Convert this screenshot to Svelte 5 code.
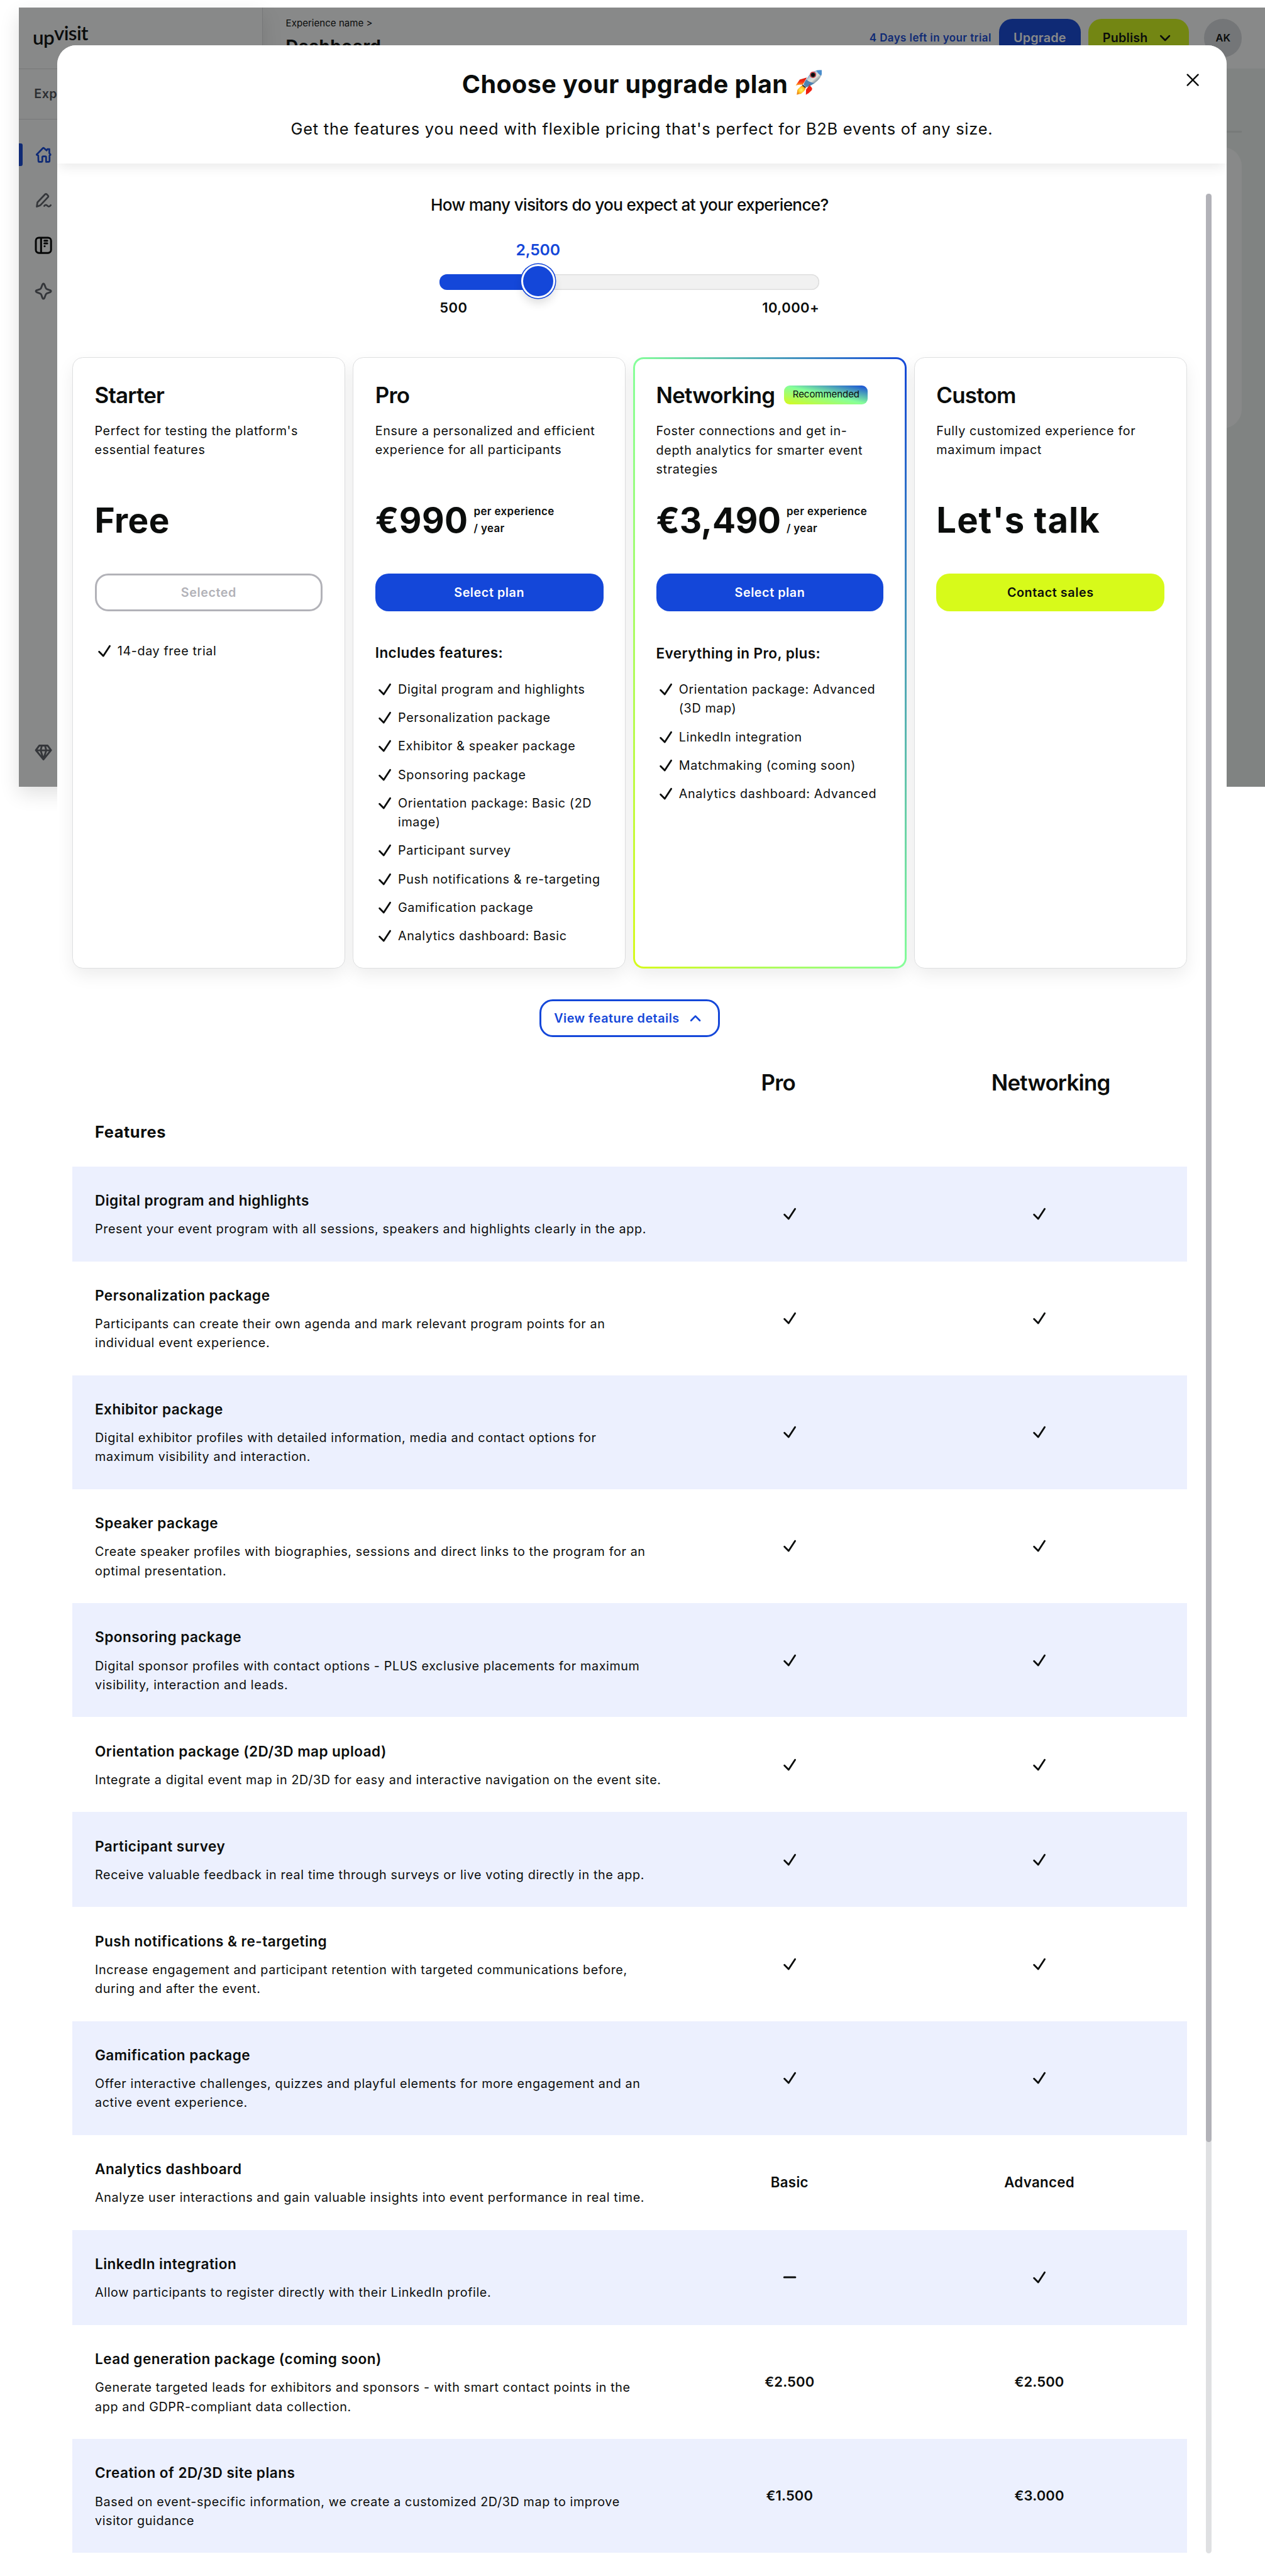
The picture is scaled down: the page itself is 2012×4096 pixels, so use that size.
<script>
  const visitors = { label: '2,500', share: 25.9 };

  const plans = [
    {
      name: 'Starter',
      text: ["Perfect for testing the platform's", 'essential features'],
      price: 'Free',
      action: 'Selected',
      kind: 'selected',
      items: [['14-day free trial']]
    },
    {
      name: 'Pro',
      text: ['Ensure a personalized and efficient', 'experience for all participants'],
      price: '€990',
      term: true,
      action: 'Select plan',
      kind: 'primary',
      heading: 'Includes features:',
      items: [
        ['Digital program and highlights'],
        ['Personalization package'],
        ['Exhibitor & speaker package'],
        ['Sponsoring package'],
        ['Orientation package: Basic (2D', 'image)'],
        ['Participant survey'],
        ['Push notifications & re-targeting'],
        ['Gamification package'],
        ['Analytics dashboard: Basic']
      ]
    },
    {
      name: 'Networking',
      badge: 'Recommended',
      text: ['Foster connections and get in-', 'depth analytics for smarter event', 'strategies'],
      price: '€3,490',
      term: true,
      action: 'Select plan',
      kind: 'primary',
      featured: true,
      heading: 'Everything in Pro, plus:',
      items: [
        ['Orientation package: Advanced', '(3D map)'],
        ['LinkedIn integration'],
        ['Matchmaking (coming soon)'],
        ['Analytics dashboard: Advanced']
      ]
    },
    {
      name: 'Custom',
      text: ['Fully customized experience for', 'maximum impact'],
      price: "Let's talk",
      action: 'Contact sales',
      kind: 'lime',
      items: []
    }
  ];

  const rows = [
    ['Digital program and highlights', ['Present your event program with all sessions, speakers and highlights clearly in the app.'], 'yes', 'yes'],
    ['Personalization package', ['Participants can create their own agenda and mark relevant program points for an', 'individual event experience.'], 'yes', 'yes'],
    ['Exhibitor package', ['Digital exhibitor profiles with detailed information, media and contact options for', 'maximum visibility and interaction.'], 'yes', 'yes'],
    ['Speaker package', ['Create speaker profiles with biographies, sessions and direct links to the program for an', 'optimal presentation.'], 'yes', 'yes'],
    ['Sponsoring package', ['Digital sponsor profiles with contact options - PLUS exclusive placements for maximum', 'visibility, interaction and leads.'], 'yes', 'yes'],
    ['Orientation package (2D/3D map upload)', ['Integrate a digital event map in 2D/3D for easy and interactive navigation on the event site.'], 'yes', 'yes'],
    ['Participant survey', ['Receive valuable feedback in real time through surveys or live voting directly in the app.'], 'yes', 'yes'],
    ['Push notifications & re-targeting', ['Increase engagement and participant retention with targeted communications before,', 'during and after the event.'], 'yes', 'yes'],
    ['Gamification package', ['Offer interactive challenges, quizzes and playful elements for more engagement and an', 'active event experience.'], 'yes', 'yes'],
    ['Analytics dashboard', ['Analyze user interactions and gain valuable insights into event performance in real time.'], 'Basic', 'Advanced'],
    ['LinkedIn integration', ['Allow participants to register directly with their LinkedIn profile.'], 'no', 'yes'],
    ['Lead generation package (coming soon)', ['Generate targeted leads for exhibitors and sponsors - with smart contact points in the', 'app and GDPR-compliant data collection.'], '€2.500', '€2.500'],
    ['Creation of 2D/3D site plans', ['Based on event-specific information, we create a customized 2D/3D map to improve', 'visitor guidance'], '€1.500', '€3.000']
  ];
</script>

{#snippet check()}
  <svg class="i20" viewBox="0 0 20 20" fill="none" stroke="currentColor" stroke-width="1.9" stroke-linecap="round" stroke-linejoin="round">
    <path d="M4.4 10.7 8.8 15.2 15.6 4.8" />
  </svg>
{/snippet}

{#snippet lines(list)}
  {#each list as line}<span class="line">{line}</span>{/each}
{/snippet}

{#snippet cell(value)}
  <div class="cell">
    {#if value === 'yes'}
      {@render check()}
    {:else if value === 'no'}
      <svg class="i20" viewBox="0 0 20 20" stroke="currentColor" stroke-width="2" stroke-linecap="round"><path d="M4.2 10H15.8" /></svg>
    {:else}
      <strong class:num={value.startsWith('€')}>{value}</strong>
    {/if}
  </div>
{/snippet}

<div class="page">
  <div class="app">
    <aside>
      <div class="logo"><span class="up">up</span><span class="visit">visit</span></div>
      <div class="group">Experience</div>
      <nav>
        <div class="entry active">
          <svg class="i20" viewBox="0 0 20 20" fill="none" stroke="currentColor" stroke-width="1.8" stroke-linejoin="round" stroke-linecap="round">
            <path d="M3.2 9.4 9.3 3.1Q10 2.4 10.7 3.1L13.3 5.5 14.2 4H16.2V8.3L17.3 9.6Q17.6 10.4 16.4 10.8V16.2Q16.4 17.5 15.3 17.5H12.8V12.6Q12.8 11.7 12 11.7H9.8Q8.8 11.7 8.8 12.6V16.4Q8.8 17.5 7.8 17.5H5.9Q4.8 17.5 4.7 16.4L4.5 10.8 3.4 10.3Q2.4 10 3.2 9.4Z" />
          </svg>
        </div>
        <div class="entry">
          <svg class="i20" viewBox="0 0 20 20" fill="none" stroke="currentColor" stroke-width="1.8" stroke-linejoin="round" stroke-linecap="round">
            <path d="M3 16.9 3.7 12.4 11.7 4Q12.6 3.1 13.5 4L14.7 5.2Q15.6 6.1 14.7 7L7.2 15Q6.4 15.9 5 16.2Z" />
            <path d="M10.8 16.2C12 14.6 13.2 14.9 14.3 16.1S16.6 16.8 17.7 15.4" />
          </svg>
        </div>
        <div class="entry dark">
          <svg class="i20" viewBox="0 0 20 20" fill="none" stroke="currentColor" stroke-width="2" stroke-linecap="round">
            <rect x="2" y="2" width="16" height="16" rx="3.2" />
            <path d="M7.5 2.5V17.5" />
            <path d="M11 5.2H14M11 8H14M11.2 11H11.3" />
          </svg>
        </div>
        <div class="entry">
          <svg class="i20" viewBox="0 0 20 20" fill="none" stroke="currentColor" stroke-width="1.9" stroke-linejoin="round">
            <path d="M9 2.8Q10 1.2 11 2.8L12.4 6.5Q12.8 7.5 13.8 7.8L17.2 9Q18.8 10 17.2 11L13.8 12.2Q12.8 12.6 12.4 13.6L11 17.2Q10 18.8 9 17.2L7.7 13.6Q7.3 12.6 6.3 12.3L2.8 11Q1.2 10 2.8 9L6.3 7.8Q7.3 7.4 7.6 6.5Z" />
          </svg>
        </div>
      </nav>
      <div class="entry gem">
        <svg class="i20" viewBox="0 0 20 20" fill="none" stroke="currentColor" stroke-width="1.9" stroke-linejoin="round">
          <path d="M5.6 3H14.4L18 7.8 10 17.6 2 7.8ZM2 8H18M8.3 3.2 7 8 10 17.2 13 8 11.7 3.2" />
        </svg>
      </div>
    </aside>
    <div class="main">
      <header class="topbar">
        <div class="where">
          <div class="crumb">Experience name &gt;</div>
          <div class="place">Dashboard</div>
        </div>
        <div class="trial">4 Days left in your trial</div>
        <div class="top-btn blue">Upgrade</div>
        <div class="top-btn green">
          Publish
          <svg class="chev" viewBox="0 0 20 20" fill="none" stroke="currentColor" stroke-width="1.8" stroke-linecap="round" stroke-linejoin="round"><path d="M5.5 8 10 12.6 14.5 8" /></svg>
        </div>
        <div class="avatar">AK</div>
      </header>
      <div class="rule"></div>
      <div class="panel"></div>
    </div>
    <div class="overlay"></div>
  </div>

  <div class="modal">
    <div class="head">
      <div class="title">
        <h1>Choose your upgrade plan</h1>
        <svg class="rocket" viewBox="0 0 170 160">
          <defs>
            <linearGradient id="hull" x1="0.25" y1="0.2" x2="0.75" y2="0.75">
              <stop offset="0" stop-color="#4d8cc4" />
              <stop offset="0.35" stop-color="#c9d3d6" />
              <stop offset="0.6" stop-color="#e3e3dc" />
              <stop offset="1" stop-color="#5d7684" />
            </linearGradient>
            <linearGradient id="fin" x1="0" y1="0" x2="0" y2="1">
              <stop offset="0" stop-color="#d5120c" />
              <stop offset="0.55" stop-color="#fb3414" />
              <stop offset="1" stop-color="#ffb52a" />
            </linearGradient>
            <radialGradient id="fire">
              <stop offset="0" stop-color="#fff36a" />
              <stop offset="0.6" stop-color="#ffc928" />
              <stop offset="1" stop-color="#ef8714" />
            </radialGradient>
          </defs>
          <path d="M2 100 28 62Q48 56 73 49L47 95Q20 92 2 100Z" fill="url(#fin)" />
          <path d="M67 159 68 126Q78 112 90 96L106 116Q108 124 103 131Q88 148 67 159Z" fill="#f01f10" />
          <path d="M9 159 13 128Q26 110 45 98L66 110Q64 130 48 142Q38 154 27 153Z" fill="url(#fire)" />
          <path d="M168 2Q120-4 86 36 68 58 54 92L72 110Q112 96 140 70 172 40 168 2Z" fill="url(#hull)" />
          <path d="M168 2Q150 0 133 4 142 24 164 38 171 20 168 2Z" fill="#4a8dcc" />
          <path d="M69 61Q58 76 52 94L70 111Q98 102 122 84 92 82 69 61Z" fill="#4d84b3" />
          <path d="M69 158 88 94 94 90 82 126Z" fill="#d8201a" />
          <path d="M46 93 70 112 60 114 44 101Z" fill="#2d3338" />
          <circle cx="112" cy="32" r="20" fill="#df2228" />
          <circle cx="112" cy="32" r="15.5" fill="#5f666b" />
          <circle cx="112" cy="32" r="12.5" fill="#08090b" />
        </svg>
      </div>
      <p>Get the features you need with flexible pricing that's perfect for B2B events of any size.</p>
      <svg class="close" viewBox="0 0 24 24" stroke="currentColor" stroke-width="1.6" stroke-linecap="round"><path d="M6.4 6.4 17.6 17.6M17.6 6.4 6.4 17.6" /></svg>
    </div>

    <div class="body">
      <div class="content">
        <div class="question">How many visitors do you expect at your experience?</div>
        <div class="slider">
          <div class="value-row"><span class="value" style="left: {visitors.share}%">{visitors.label}</span></div>
          <div class="track">
            <div class="fill" style="width: {visitors.share}%"></div>
            <div class="thumb" style="left: {visitors.share}%"></div>
          </div>
          <div class="range"><span>500</span><span class="max">10,000+</span></div>
        </div>

        <div class="plans">
          {#each plans as plan}
            <section class="plan" class:featured={plan.featured}>
              <div class="name">
                <h2>{plan.name}</h2>
                {#if plan.badge}<span class="badge">{plan.badge}</span>{/if}
              </div>
              <p class="about">{@render lines(plan.text)}</p>
              <div class="price">
                <span class="amount" class:wide={plan.name === 'Custom'} class:tight={plan.price === '€3,490'}>{plan.price}</span>
                {#if plan.term}<span class="term"><span class="line">per experience</span><span class="line">/ year</span></span>{/if}
              </div>
              <button class={plan.kind}>{plan.action}</button>
              {#if plan.heading}<h3>{plan.heading}</h3>{/if}
              <ul>
                {#each plan.items as item}
                  <li>{@render check()}<span>{@render lines(item)}</span></li>
                {/each}
              </ul>
            </section>
          {/each}
        </div>

        <div class="toggle">
          View feature details
          <svg class="chev" viewBox="0 0 20 20" fill="none" stroke="currentColor" stroke-width="1.8" stroke-linecap="round" stroke-linejoin="round"><path d="M5.4 12.4 10 7.7 14.6 12.4" /></svg>
        </div>

        <div class="columns"><h2>Pro</h2><h2>Networking</h2></div>
        <div class="features">Features</div>
        <div class="table">
          {#each rows as [name, text, pro, networking]}
            <div class="row">
              <div class="feature">
                <h3>{name}</h3>
                <p>{@render lines(text)}</p>
              </div>
              {@render cell(pro)}
              {@render cell(networking)}
            </div>
          {/each}
        </div>
      </div>
      <div class="scroll"><div class="grip"></div></div>
    </div>
  </div>
</div>

<style>
  /* 0.1rem is one layout unit */
  :global(html) { font-size: 15.103px; }
  :global(body) { margin: 0; background: #fff; overflow: hidden; }

  .page {
    position: relative;
    width: 133.3rem;
    height: 271.2rem;
    overflow: hidden;
    font-family: Inter, 'Liberation Sans', sans-serif;
    font-size: 1.309rem;
    line-height: 2rem;
    letter-spacing: 0.031em;
    color: #0b0d0c;
    background: #fff;
  }
  h1, h2, h3, p, ul { margin: 0; padding: 0; }
  .line { display: block; white-space: nowrap; }
  .i20 { width: 2rem; height: 2rem; flex: none; display: block; }
  .chev { width: 2rem; height: 2rem; flex: none; }

  /* application behind the dialog */
  .app {
    position: absolute;
    z-index: 0;
    left: 2rem;
    top: 0.8rem;
    width: 131.3rem;
    height: 82rem;
    display: flex;
  }
  aside {
    position: relative;
    z-index: 1;
    width: 25.7rem;
    box-sizing: border-box;
    border-right: 0.1rem solid #dedfe0;
    background: #fff;
    box-shadow: 0 0.8rem 2rem rgba(0, 0, 0, 0.12);
    display: flex;
    flex-direction: column;
  }
  .logo {
    height: 6.5rem;
    box-sizing: border-box;
    border-bottom: 0.1rem solid #dedfe0;
    padding: 0 0 0.65rem 1.45rem;
    display: flex;
    align-items: center;
    font: 600 2.08rem/2.4rem Lato, sans-serif;
    letter-spacing: -0.022em;
  }
  .up { padding-top: 0.5rem; }
  .visit { padding-bottom: 0.45rem; }
  .group {
    height: 5.2rem;
    line-height: 5.2rem;
    padding-left: 1.6rem;
    border-bottom: 0.1rem solid #dedfe0;
    font-weight: 600;
    letter-spacing: 0.018em;
    color: #4c4e56;
  }
  nav { display: flex; flex-direction: column; gap: 2.4rem; padding-top: 2.5rem; flex: 1; }
  .entry { height: 2.4rem; display: flex; align-items: center; padding-left: 1.6rem; color: #5d5f66; }
  .active { color: #1447d9; padding-left: 0; gap: 1.2rem; }
  .active::before { content: ''; width: 0.4rem; height: 100%; border-radius: 0 0.2rem 0.2rem 0; background: #1447d9; }
  .dark { color: #000; }
  .gem { margin-bottom: 2.4rem; }
  .main { flex: 1; background: #f0f4f1; display: flex; flex-direction: column; align-items: flex-end; }
  .topbar {
    align-self: stretch;
    height: 6.4rem;
    box-sizing: border-box;
    background: #fff;
    display: flex;
    align-items: center;
    padding: 0 2.5rem 0 2.4rem;
  }
  .where { flex: 1; align-self: flex-start; padding-top: 0.75rem; }
  .crumb { font-size: 1rem; line-height: 1.8rem; letter-spacing: 0; }
  .place { font-size: 1.82rem; line-height: 2.4rem; font-weight: 700; letter-spacing: 0.022em; margin-top: 0.26rem; }
  .trial { color: #1447d9; font-size: 1.122rem; font-weight: 600; letter-spacing: 0.0255em; margin-right: 0.8rem; }
  .top-btn {
    height: 4rem;
    border-radius: 1.4rem;
    box-sizing: border-box;
    display: flex;
    align-items: center;
    justify-content: center;
    font-weight: 600;
    letter-spacing: 0.01em;
  }
  .blue { width: 8.6rem; background: #1447d9; color: #fff; }
  .green { width: 10.6rem; background: #d7fa1a; margin: 0 1.6rem 0 0.8rem; gap: 0.8rem; }
  .avatar {
    width: 4rem;
    height: 4rem;
    border-radius: 50%;
    background: #d9dbde;
    text-align: center;
    line-height: 4rem;
    font-size: 1.092rem;
    font-weight: 600;
    letter-spacing: 0;
  }
  .rule { width: 60rem; height: 0.2rem; margin: 6.6rem 2.5rem 0 0; background: #e0e3e1; }
  .panel { width: 60rem; height: 29.6rem; margin: 1.5rem 2.5rem 0 0; border-radius: 2rem; background: #fff; }
  .overlay { position: absolute; inset: 0; z-index: 2; background: rgba(11, 13, 12, 0.488); }

  /* dialog */
  .modal {
    position: absolute;
    z-index: 1;
    left: 6rem;
    top: 4.8rem;
    width: 123.2rem;
    height: 266.4rem;
    border-radius: 2rem 2rem 0 0;
    background: #fff;
    overflow: hidden;
  }
  .head {
    position: relative;
    height: 12.4rem;
    box-sizing: border-box;
    padding-top: 2.4rem;
    display: flex;
    flex-direction: column;
    align-items: center;
    gap: 1.8rem;
    background: #fff;
    box-shadow: 0 0.6rem 1.2rem -0.2rem rgba(0, 0, 0, 0.09);
  }
  .title { display: flex; align-items: center; gap: 0.8rem; height: 3.4rem; }
  h1 { font-size: 2.618rem; line-height: 3.4rem; font-weight: 700; letter-spacing: 0.0105em; white-space: nowrap; margin-right: -0.06rem; }
  .rocket { width: 2.82rem; height: 2.66rem; margin-top: -0.5rem; }
  .head p { font-size: 1.683rem; line-height: 2.4rem; letter-spacing: 0.03em; white-space: nowrap; }
  .close { position: absolute; right: 2.4rem; top: 2.4rem; width: 2.4rem; height: 2.4rem; }

  .body { display: flex; gap: 2rem; padding: 3.2rem 0 0 1.6rem; }
  .content { width: 117.4rem; display: flex; flex-direction: column; align-items: center; }
  .question { font-size: 1.733rem; line-height: 2.4rem; font-weight: 500; letter-spacing: -0.0265em; white-space: nowrap; }
  .slider { width: 40rem; margin: 2.4rem 0 4.2rem; font-weight: 600; }
  .value-row { position: relative; height: 2.2rem; }
  .value {
    position: absolute;
    transform: translateX(-50%);
    color: #1447d9;
    font-size: 1.638rem;
    line-height: 2.2rem;
    letter-spacing: -0.008em;
  }
  .track {
    position: relative;
    height: 1.6rem;
    box-sizing: border-box;
    margin: 1.5rem 0 0.9rem;
    border-radius: 0.8rem;
    background: #f1f1f1;
    box-shadow: inset 0 0 0 0.1rem #dedede;
  }
  .fill { height: 100%; border-radius: 0.8rem 0 0 0.8rem; background: #1447d9; }
  .thumb {
    position: absolute;
    top: 50%;
    width: 3.2rem;
    height: 3.2rem;
    margin: -1.7rem 0 0 -1.6rem;
    border-radius: 50%;
    background: #1447d9;
    box-shadow: 0 0 0 0.2rem #fff, 0 0 0 0.3rem #1447d9, 0 0.6rem 1rem 0.1rem rgba(0, 0, 0, 0.14);
  }
  .range { display: flex; justify-content: space-between; font-size: 1.456rem; line-height: 2rem; letter-spacing: 0.022em; }

  .plans { display: grid; grid-template-columns: repeat(4, 1fr); gap: 0.8rem; align-self: stretch; }
  .plan {
    height: 64.4rem;
    box-sizing: border-box;
    padding: 2.3rem;
    border: 0.1rem solid #dedfe0;
    border-radius: 1.1rem;
    background: #fff;
    box-shadow: 0 0.7rem 1.8rem -0.1rem rgba(0, 0, 0, 0.08);
    display: flex;
    flex-direction: column;
  }
  .featured {
    padding: 2.2rem;
    border: 0.2rem solid transparent;
    background:
      linear-gradient(#fff, #fff) padding-box,
      linear-gradient(to top right, #d7fa1a, #86ff9a 50%, #1447d9) border-box;
  }
  .name { display: flex; align-items: center; gap: 1rem; height: 3.2rem; }
  h2 { font-size: 2.311rem; line-height: 3.2rem; font-weight: 600; letter-spacing: -0.0225em; }
  .badge {
    width: 8.8rem;
    height: 2rem;
    border-radius: 0.6rem;
    text-align: center;
    font-size: 0.995rem;
    letter-spacing: -0.004em;
    line-height: 1.9rem;
    background: linear-gradient(to top right, #d7fa1a, #86ff9a 50%, #1447d9);
  }
  .about { margin-top: 1.2rem; height: 6rem; }
  .price { margin: 2rem 0 3.2rem; height: 4.8rem; display: flex; gap: 0.6rem; align-items: center; }
  .amount { font-size: 3.64rem; line-height: 4.8rem; font-weight: 700; letter-spacing: 0.007em; white-space: nowrap; }
  .tight { letter-spacing: -0.006em; }
  .wide { font-size: 3.72rem; letter-spacing: 0.018em; }
  .term { font-size: 1.122rem; line-height: 1.8rem; font-weight: 600; letter-spacing: 0.022em; }
  button {
    height: 4rem;
    flex: none;
    box-sizing: border-box;
    border: 0;
    border-radius: 1.4rem;
    font: inherit;
    font-weight: 600;
    letter-spacing: 0.028em;
    color: #0b0d0c;
    padding: 0;
  }
  .primary { background: #1447d9; color: #fff; }
  .lime { background: #d7fa1a; }
  .selected { background: #fff; border: 0.2rem solid #b2b2b8; color: #b2b2b8; }
  h3 { font-size: 1.496rem; line-height: 2.4rem; font-weight: 600; letter-spacing: 0.02em; white-space: nowrap; }
  .plan h3 { margin: 3.2rem 0 -1.6rem; letter-spacing: 0.017em; }
  ul { list-style: none; margin-top: 3.2rem; display: flex; flex-direction: column; gap: 1rem; }
  li { display: flex; gap: 0.4rem; }

  .toggle {
    width: 19rem;
    height: 4rem;
    box-sizing: border-box;
    margin: 3.2rem 0;
    border: 0.2rem solid #1447d9;
    border-radius: 1.4rem;
    display: flex;
    align-items: center;
    justify-content: center;
    gap: 0.7rem;
    color: #1447d9;
    font-weight: 600;
    letter-spacing: 0.025em;
    white-space: nowrap;
  }
  .columns { align-self: flex-end; display: grid; grid-template-columns: 28.7rem 28.7rem; text-align: center; }
  .features {
    align-self: stretch;
    padding: 2.4rem;
    line-height: 2.4rem;
    font-size: 1.683rem;
    font-weight: 700;
    letter-spacing: 0.022em;
  }
  .table { align-self: stretch; }
  .row {
    display: grid;
    grid-template-columns: 1fr 26.3rem 26.3rem;
    padding: 2.4rem;
  }
  .row:nth-child(odd) { background: #ecf0fe; }
  .feature p { margin-top: 0.8rem; }
  .cell { display: flex; align-items: center; justify-content: center; }
  strong { font-size: 1.474rem; font-weight: 600; letter-spacing: 0.014em; }
  .num { font-size: 1.456rem; letter-spacing: 0.006em; }

  .scroll { width: 0.6rem; height: 248.4rem; border-radius: 0.3rem; background: #dfe0e2; }
  .grip { height: 205.1rem; border-radius: 0.3rem; background: #b2b2b8; }
</style>
